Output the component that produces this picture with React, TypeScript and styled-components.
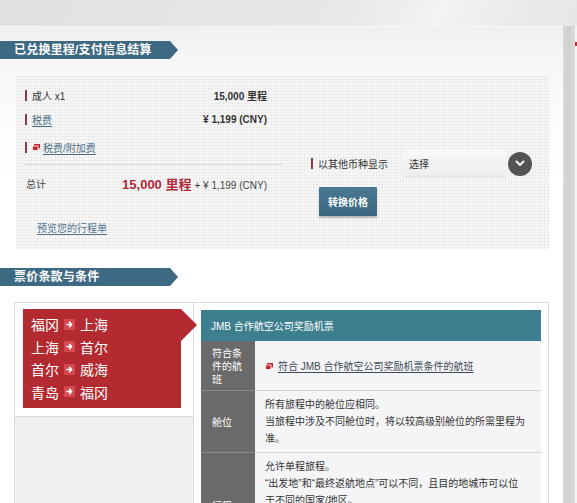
import React from "react";
import styled, { createGlobalStyle } from "styled-components";

const Global = createGlobalStyle`
  html, body { margin: 0; padding: 0; }
  body {
    width: 577px;
    height: 503px;
    overflow: hidden;
    background: #e8e8e8;
    font-family: "Liberation Sans", "Noto Sans CJK SC", sans-serif;
    color: #333;
  }
  * { box-sizing: border-box; }
`;

const Page = styled.div`
  display: flex;
  width: 577px;
  height: 503px;
  overflow: hidden;
  background: linear-gradient(112deg, #e1e1e1 0%, #e8e8e8 45%, #f3f3f3 57%, #e8e8e8 70%, #e4e4e4 100%);
`;

const Main = styled.main`
  width: 563px;
  flex: none;
  margin-top: 26px;
  padding-top: 14px;
  border-top: 1px solid #f7f7f7;
  background: linear-gradient(180deg, #f0f0f0 0px, #f6f6f6 30px, #fcfcfc 90px, #ffffff 160px);
`;

const SideStrip = styled.div`
  width: 12px;
  flex: none;
  margin-top: 26px;
  background: linear-gradient(90deg, #d9d9d9 0%, #cfcfcf 50%, #dcdcdc 100%);
`;

const Edge = styled.div`
  width: 2px;
  flex: none;
  margin-top: 26px;
  padding-top: 16px;
  background: #f4f4f4;
`;

const EdgeTick = styled.div`
  width: 2px;
  height: 4px;
  background: #b8323a;
`;

const SectionTitle = styled.h2`
  margin: 0;
  width: 178px;
  height: 18px;
  padding-left: 14px;
  background: #3e6983;
  color: #fff;
  font-size: 12px;
  font-weight: bold;
  line-height: 18px;
  letter-spacing: 0.2px;
  clip-path: polygon(0 0, 170px 0, 178px 50%, 170px 100%, 0 100%);
`;

const Summary = styled.section`
  display: flex;
  width: 534px;
  height: 173px;
  margin: 17px 0 19px 16px;
  padding-left: 9px;
  background-color: #f8f8f8;
  background-image:
    linear-gradient(rgba(0, 0, 0, 0.035) 1px, transparent 1px),
    linear-gradient(90deg, rgba(0, 0, 0, 0.035) 1px, transparent 1px);
  background-size: 3px 3px;
`;

const LeftCol = styled.div`
  width: 257px;
  flex: none;
  padding-top: 7px;
`;

const Row = styled.div<{ $gap?: number }>`
  display: flex;
  align-items: center;
  justify-content: space-between;
  height: 24px;
  margin-top: ${(p) => p.$gap ?? 0}px;
  padding-right: 15px;
  font-size: 10px;
`;

const LabelWrap = styled.div`
  display: flex;
  align-items: center;
`;

const Marker = styled.span`
  display: inline-block;
  width: 2px;
  height: 11px;
  margin-right: 5px;
  background: #8c3a46;
`;

const Value = styled.span`
  font-weight: bold;
  color: #333;
`;

const SoftLink = styled.a`
  color: #4b6c85;
  text-decoration: underline;
  text-underline-offset: 2px;
  font-size: 10px;
  cursor: pointer;
`;

const Divider = styled.div`
  height: 1px;
  margin-top: 5px;
  background: #d6d6d6;
`;

const TotalRow = styled.div`
  display: flex;
  align-items: center;
  justify-content: space-between;
  height: 36px;
  padding: 0 15px 0 1px;
  font-size: 10px;
  color: #444;
`;

const TotalValue = styled.div`
  display: flex;
  align-items: baseline;
  gap: 3px;
`;

const BigMiles = styled.span`
  font-size: 13px;
  font-weight: bold;
  color: #b02a3a;
`;

const Extra = styled.span`
  font-size: 10px;
  color: #444;
`;

const PreviewLink = styled(SoftLink)`
  display: inline-block;
  margin: 21px 0 0 12px;
  line-height: 14px;
  color: #4e7490;
`;

const RightCol = styled.div`
  margin-left: 29px;
  padding-top: 75px;
`;

const CurrencyRow = styled.div`
  display: flex;
  align-items: center;
  height: 25px;
  font-size: 10px;
  color: #333;
`;

const SelectBox = styled.div`
  width: 103px;
  height: 25px;
  margin-left: 15px;
  padding-left: 6px;
  display: flex;
  align-items: center;
  background: linear-gradient(180deg, #f8f8f8 0%, #ededed 100%);
  box-shadow: 0 1px 1px rgba(0, 0, 0, 0.08);
  font-size: 10px;
  color: #333;
`;

const RoundToggle = styled.div`
  width: 24px;
  height: 24px;
  margin-left: 2px;
  border-radius: 50%;
  background: #545454;
  display: flex;
  align-items: center;
  justify-content: center;
`;

const ConvertButton = styled.button`
  display: block;
  width: 58px;
  height: 29px;
  margin: 11px 0 0 8px;
  border: none;
  border-radius: 1px;
  background: linear-gradient(180deg, #4b7893 0%, #3b6780 100%);
  box-shadow: 0 2px 2px rgba(0, 0, 0, 0.25);
  color: #fff;
  font-family: inherit;
  font-size: 10px;
  font-weight: bold;
  padding: 0;
`;

const Terms = styled.section`
  display: grid;
  grid-template-columns: 179px 1fr;
  width: 535px;
  min-height: 220px;
  margin: 16px 0 0 14px;
  border: 1px solid #dcdcdc;
  background: #fff;
`;

const RouteCol = styled.div`
  display: flex;
  flex-direction: column;
  border-right: 1px solid #dcdcdc;
`;

const RouteArea = styled.div`
  padding: 6px 0 8px 8px;
  border-bottom: 1px solid #dcdcdc;
  background: #fff;
`;

const RouteBox = styled.div`
  position: relative;
  width: 158px;
  height: 99px;
  padding: 4px 0 0 8px;
  background: #b32a30;
  &::after {
    content: "";
    position: absolute;
    left: 158px;
    top: 0;
    border-left: 16px solid #b32a30;
    border-top: 16px solid transparent;
    border-bottom: 16px solid transparent;
  }
`;

const RouteLine = styled.div`
  display: flex;
  align-items: center;
  gap: 5px;
  height: 22.5px;
  color: #fff;
  font-size: 14px;
`;

const RouteFiller = styled.div`
  flex: 1;
  background: #f0f0f2;
`;

const TableWrap = styled.div`
  padding: 7px 7px 0 7px;
`;

const TableHead = styled.div`
  height: 31px;
  padding-left: 10px;
  display: flex;
  align-items: center;
  background: #3d7f8e;
  color: #fff;
  font-size: 10px;
`;

const TableRow = styled.div<{ $minHeight?: number }>`
  display: grid;
  grid-template-columns: 54px 1fr;
  min-height: ${(p) => p.$minHeight ?? 0}px;
`;

const RowLabel = styled.div<{ $first?: boolean }>`
  display: flex;
  align-items: center;
  padding: 5px 9px 4px 11px;
  background: #6a6a6a;
  border-top: 1px solid ${(p) => (p.$first ? "#6a6a6a" : "#8a8a8a")};
  color: #fff;
  font-size: 10px;
  line-height: 13px;
`;

const RowContent = styled.div<{ $center?: boolean }>`
  display: flex;
  align-items: ${(p) => (p.$center ? "center" : "flex-start")};
  padding: 5px 4px 5px 10px;
  background: #f5f5f7;
  border-top: 1px solid ${(p) => (p.$center ? "#f5f5f7" : "#d3d3d3")};
  font-size: 10px;
  line-height: 17px;
  color: #333;
`;

const DarkLink = styled.a`
  color: #3c4a55;
  text-decoration: underline;
  text-underline-offset: 2px;
  margin-left: 5px;
`;

const Chevron = () => (
  <svg width="10" height="7" viewBox="0 0 10 7">
    <path d="M1.5 1.5 L5 5 L8.5 1.5" fill="none" stroke="#fff" strokeWidth="2" strokeLinecap="round" strokeLinejoin="round" />
  </svg>
);

const WindowIcon = () => (
  <svg width="8" height="7" viewBox="0 0 8 7" style={{ flex: "none" }}>
    <rect x="2" y="0" width="6" height="4.5" fill="#c9252c" />
    <rect x="0.4" y="2" width="5.6" height="4.6" fill="#c9252c" stroke="#fff" strokeWidth="0.8" />
  </svg>
);

const RouteArrow = () => (
  <svg width="11" height="11" viewBox="0 0 11 11" style={{ flex: "none" }}>
    <rect width="11" height="11" fill="#d4494f" />
    <path d="M2.8 5.5 H7.6 M5.6 3.4 L7.7 5.5 L5.6 7.6" fill="none" stroke="#fff" strokeWidth="1.6" strokeLinecap="round" strokeLinejoin="round" />
  </svg>
);

const routes: [string, string][] = [
  ["福冈", "上海"],
  ["上海", "首尔"],
  ["首尔", "威海"],
  ["青岛", "福冈"],
];

export default function App() {
  return (
    <>
      <Global />
      <Page>
        <Main>
          <SectionTitle>已兑换里程/支付信息结算</SectionTitle>
          <Summary>
            <LeftCol>
              <Row>
                <LabelWrap>
                  <Marker />
                  成人 x1
                </LabelWrap>
                <Value>15,000 里程</Value>
              </Row>
              <Row>
                <LabelWrap>
                  <Marker />
                  <SoftLink>税费</SoftLink>
                </LabelWrap>
                <Value>¥ 1,199 (CNY)</Value>
              </Row>
              <Row $gap={4}>
                <LabelWrap>
                  <Marker />
                  <WindowIcon />
                  <SoftLink style={{ marginLeft: 3 }}>税费/附加费</SoftLink>
                </LabelWrap>
              </Row>
              <Divider />
              <TotalRow>
                <span>总计</span>
                <TotalValue>
                  <BigMiles>15,000 里程</BigMiles>
                  <Extra>+ ¥ 1,199 (CNY)</Extra>
                </TotalValue>
              </TotalRow>
              <PreviewLink>预览您的行程单</PreviewLink>
            </LeftCol>
            <RightCol>
              <CurrencyRow>
                <Marker />
                以其他币种显示
                <SelectBox>选择</SelectBox>
                <RoundToggle>
                  <Chevron />
                </RoundToggle>
              </CurrencyRow>
              <ConvertButton>转换价格</ConvertButton>
            </RightCol>
          </Summary>

          <SectionTitle>票价条款与条件</SectionTitle>
          <Terms>
            <RouteCol>
              <RouteArea>
                <RouteBox>
                  {routes.map(([a, b]) => (
                    <RouteLine key={a + b}>
                      <span>{a}</span>
                      <RouteArrow />
                      <span>{b}</span>
                    </RouteLine>
                  ))}
                </RouteBox>
              </RouteArea>
              <RouteFiller />
            </RouteCol>
            <TableWrap>
              <TableHead>JMB 合作航空公司奖励机票</TableHead>
              <TableRow>
                <RowLabel $first>符合条件的航班</RowLabel>
                <RowContent $center>
                  <WindowIcon />
                  <DarkLink>符合 JMB 合作航空公司奖励机票条件的航班</DarkLink>
                </RowContent>
              </TableRow>
              <TableRow>
                <RowLabel>舱位</RowLabel>
                <RowContent>
                  <div>
                    所有旅程中的舱位应相同。
                    <br />
                    当旅程中涉及不同舱位时，将以较高级别舱位的所需里程为
                    <br />
                    准。
                  </div>
                </RowContent>
              </TableRow>
              <TableRow $minHeight={106}>
                <RowLabel>行程</RowLabel>
                <RowContent>
                  <div>
                    允许单程旅程。
                    <br />
                    “出发地”和“最终返航地点”可以不同，且目的地城市可以位
                    <br />
                    于不同的国家/地区。
                  </div>
                </RowContent>
              </TableRow>
            </TableWrap>
          </Terms>
        </Main>
        <SideStrip />
        <Edge>
          <EdgeTick />
        </Edge>
      </Page>
    </>
  );
}
